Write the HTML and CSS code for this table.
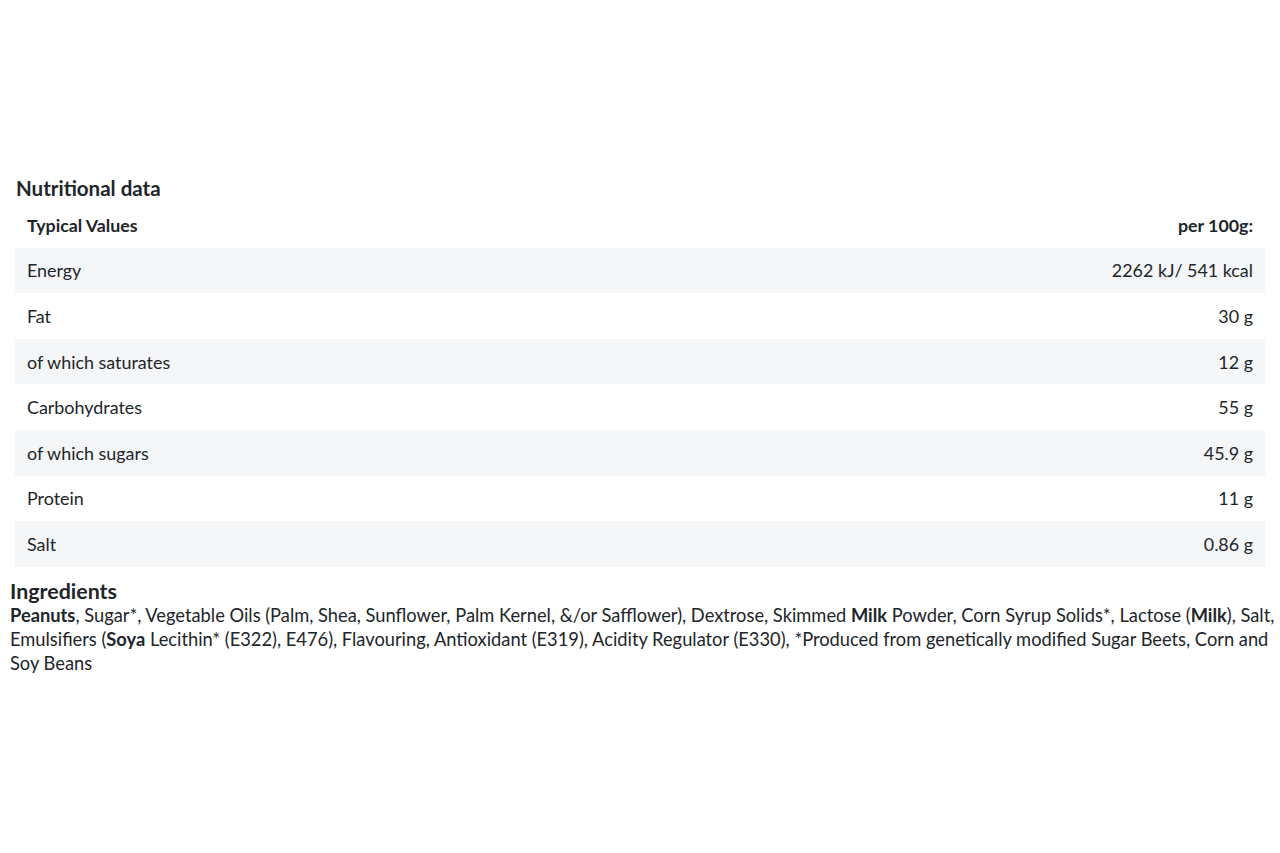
FILE: index.html
```html
<!DOCTYPE html>
<html lang="en">
<head>
    <meta charset="UTF-8">
    <meta name="viewport" content="width=device-width, initial-scale=1.0">
    <title>Nutritional data</title>
    <link rel="stylesheet" href="styles.css">
</head>
<body>
    <div class="product-info">
        <div class="nutrition">
            <h3>Nutritional data</h3>
            <table class="nutrition-table">
                <thead>
                    <tr>
                        <th>Typical Values</th>
                        <th class="value">per 100g:</th>
                    </tr>
                </thead>
                <tbody>
                    <tr><td>Energy</td><td class="value">2262 kJ/ 541 kcal</td></tr>
                    <tr><td>Fat</td><td class="value">30 g</td></tr>
                    <tr><td>of which saturates</td><td class="value">12 g</td></tr>
                    <tr><td>Carbohydrates</td><td class="value">55 g</td></tr>
                    <tr><td>of which sugars</td><td class="value">45.9 g</td></tr>
                    <tr><td>Protein</td><td class="value">11 g</td></tr>
                    <tr><td>Salt</td><td class="value">0.86 g</td></tr>
                </tbody>
            </table>
        </div>

        <div class="ingredients">
            <h3>Ingredients</h3>
            <p><b>Peanuts</b>, Sugar*, Vegetable Oils (Palm, Shea, Sunflower, Palm Kernel, &amp;/or Safflower), Dextrose, Skimmed <b>Milk</b> Powder, Corn Syrup Solids*, Lactose (<b>Milk</b>), Salt, Emulsifiers (<b>Soya</b> Lecithin* (E322), E476), Flavouring, Antioxidant (E319), Acidity Regulator (E330), *Produced from genetically modified Sugar Beets, Corn and Soy Beans</p>
        </div>
    </div>
</body>
</html>
```

FILE: styles.css
```css
body {
    font-family: Lato, "Noto Sans", sans-serif;
    color: #212529;
    margin: 0;
    padding: 0;
    background-color: #fff;
}
.product-info {
    padding-top: 176px;
}
.nutrition {
    padding: 0 15px;
}
.nutrition h3 {
    margin: 0 0 0 1px;
    font-size: 20.5px;
    font-weight: 700;
    line-height: 24px;
}
.nutrition-table {
    width: 100%;
    border-collapse: collapse;
    margin-top: 2px;
    font-size: 17.9px;
}
.nutrition-table th,
.nutrition-table td {
    text-align: left;
    padding: 0 12px;
    height: 45.6px;
    line-height: 20px;
}
.nutrition-table th {
    font-weight: 700;
    font-size: 17.8px;
}
.nutrition-table .value {
    text-align: right;
}
.nutrition-table tbody tr:nth-child(odd) {
    background-color: #f5f6f8;
}
.ingredients {
    padding: 12px 1px 0 10px;
}
.ingredients h3 {
    margin: 0;
    font-size: 21.4px;
    font-weight: 700;
    line-height: 24px;
}
.ingredients p {
    margin: 0;
    font-size: 18.3px;
    line-height: 24px;
}
.ingredients b {
    font-weight: 700;
}
```
